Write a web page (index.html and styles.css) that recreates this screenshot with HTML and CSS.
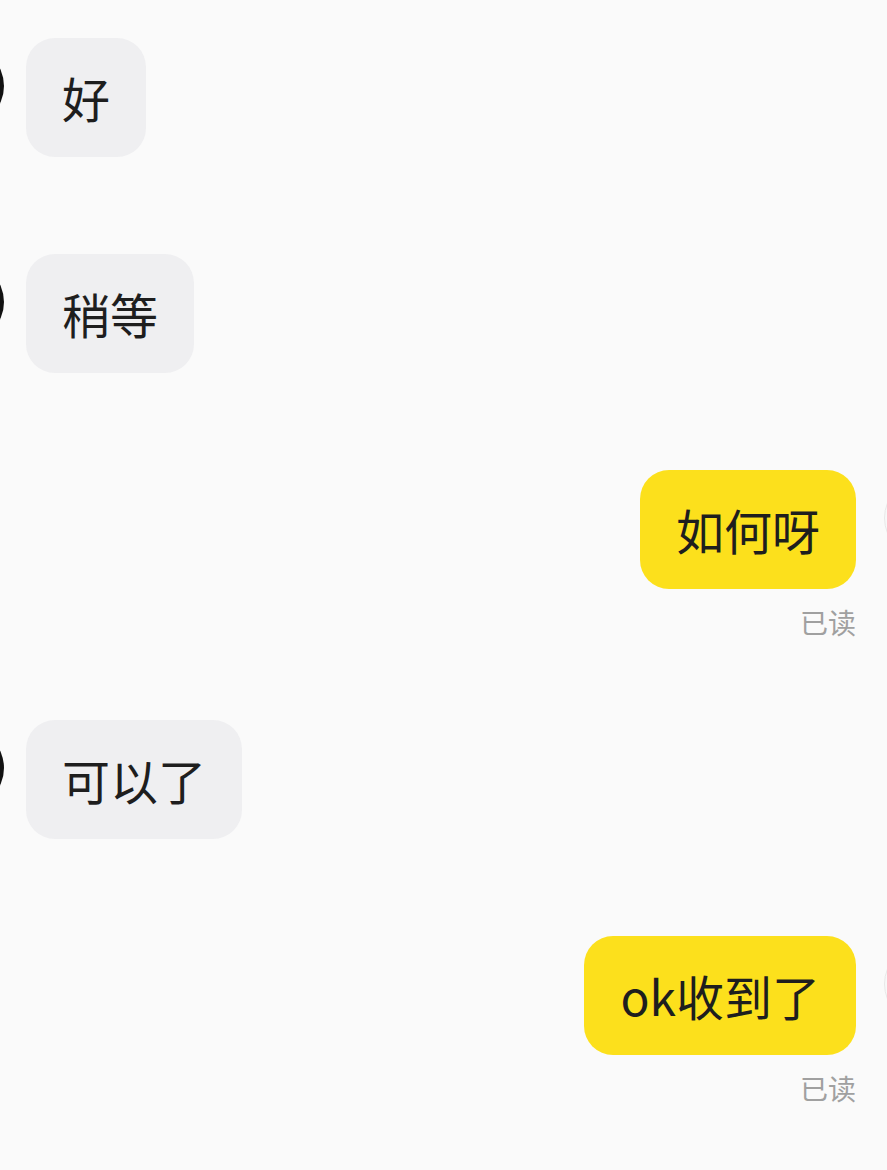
FILE: index.html
```html
<!DOCTYPE html>
<html lang="zh-CN">
<head>
<meta charset="utf-8">
<title>聊天</title>
<link rel="stylesheet" href="styles.css">
</head>
<body>
<main class="chat">
  <div class="msg recv">
    <div class="avatar dark"></div>
    <div class="bubble grey">好</div>
  </div>
  <div class="msg recv">
    <div class="avatar dark"></div>
    <div class="bubble grey">稍等</div>
  </div>
  <div class="msg sent with-read">
    <div class="col">
      <div class="bubble yellow">如何呀</div>
      <div class="read">已读</div>
    </div>
    <div class="avatar light"></div>
  </div>
  <div class="msg recv">
    <div class="avatar dark"></div>
    <div class="bubble grey">可以了</div>
  </div>
  <div class="msg sent with-read">
    <div class="col">
      <div class="bubble yellow">ok收到了</div>
      <div class="read">已读</div>
    </div>
    <div class="avatar light"></div>
  </div>
</main>
</body>
</html>
```

FILE: styles.css
```css
html, body {
  margin: 0;
  padding: 0;
}
body {
  background: #fafafa;
  font-family: "Noto Sans CJK SC", "Noto Sans", sans-serif;
  color: #1e1e1e;
  width: 887px;
  height: 1170px;
  overflow: hidden;
}
.chat {
  display: flex;
  flex-direction: column;
  padding-top: 38px;
  overflow: hidden;
}
.msg {
  display: flex;
  align-items: flex-start;
  margin-bottom: 97px;
}
.msg.with-read {
  margin-bottom: 84px;
}
.msg.recv {
  margin-left: -76px;
  gap: 22px;
}
.msg.sent {
  justify-content: flex-end;
  margin-right: -77px;
  gap: 28px;
}
.avatar {
  width: 80px;
  height: 80px;
  border-radius: 50%;
  flex: none;
  margin-top: 8px;
  box-sizing: border-box;
}
.avatar.dark {
  background: #111;
}
.avatar.light {
  background: #f8f8f8;
  border: 1px solid #e8e8e8;
}
.col {
  display: flex;
  flex-direction: column;
  align-items: flex-end;
}
.bubble {
  font-size: 48px;
  line-height: 55px;
  padding: 32px 36px;
  border-radius: 29px;
  white-space: nowrap;
}
.bubble.grey {
  background: #efeff1;
}
.bubble.yellow {
  background: #fce01c;
}
.read {
  margin-top: 19px;
  font-size: 28px;
  line-height: 28px;
  color: #a0a0a0;
}
```
